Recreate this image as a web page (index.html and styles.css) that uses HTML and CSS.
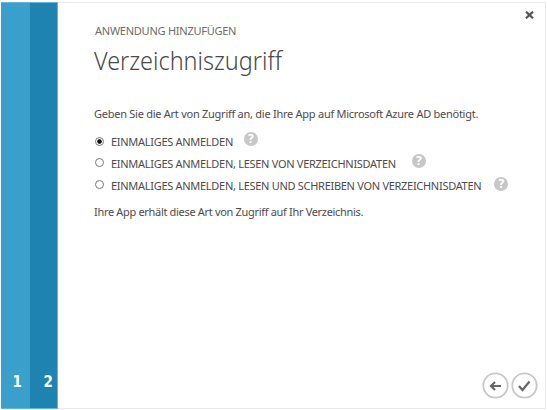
FILE: index.html
```html
<!DOCTYPE html>
<html lang="de">
<head>
<meta charset="utf-8">
<title>Anwendung hinzufügen</title>
<link rel="stylesheet" href="styles.css">
</head>
<body>
<div class="dialog">
  <nav class="steps">
    <div class="step step-one">1</div>
    <div class="step step-two">2</div>
  </nav>
  <main class="content">
    <p class="eyebrow">ANWENDUNG HINZUFÜGEN</p>
    <h1>Verzeichniszugriff</h1>
    <p class="intro">Geben Sie die Art von Zugriff an, die Ihre App auf Microsoft Azure AD benötigt.</p>
    <div class="options">
      <div class="option"><i class="radio checked"></i><span>EINMALIGES ANMELDEN</span><b class="help help-first">?</b></div>
      <div class="option"><i class="radio"></i><span>EINMALIGES ANMELDEN, LESEN VON VERZEICHNISDATEN</span><b class="help help-second">?</b></div>
      <div class="option"><i class="radio"></i><span>EINMALIGES ANMELDEN, LESEN UND SCHREIBEN VON VERZEICHNISDATEN</span><b class="help help-third">?</b></div>
    </div>
    <p class="note">Ihre App erhält diese Art von Zugriff auf Ihr Verzeichnis.</p>
    <div class="actions">
      <svg width="27" height="27" viewBox="0 0 27 27"><circle cx="13.5" cy="13.5" r="12.2"/><path d="M19 14H9M13 10l-4 4 4 4"/></svg>
      <svg width="27" height="27" viewBox="0 0 27 27"><circle cx="13.5" cy="13.5" r="12.2"/><path d="M8 14l3.500 4 7-8.500"/></svg>
    </div>
  </main>
  <svg class="close" width="9" height="8" viewBox="0 0 9 8"><path d="M1 .7l7 6.600M8 .7L1 7.300"/></svg>
</div>
</body>
</html>
```
FILE: styles.css
```css
* { box-sizing: border-box; }
body { margin: 0; background: #fff; font-family: "Noto Sans", "Open Sans", sans-serif; }
p, h1 { margin: 0; white-space: nowrap; }
.dialog {
  position: relative;
  display: flex;
  width: 545px;
  height: 407px;
  margin: 2px 0 0 1px;
  border: 1px solid #e8e8e8;
  border-left: 0;
}
.steps { display: flex; width: 57px; margin: -1px 0; border: 1px solid #6ab5d6; border-left: 0; flex: none; }
.step {
  display: flex;
  align-items: flex-end;
  justify-content: flex-end;
  padding-bottom: 16px;
  color: #fff;
  font-family: "DejaVu Sans Condensed", "DejaVu Sans", sans-serif;
  font-stretch: condensed;
  font-size: 15px;
  line-height: 20px;
  font-weight: 700;
}
.step-one { width: 29px; padding-right: 8px; background: #3a9fca; }
.step-two { width: 27px; padding-right: 4px; background: #1e83b0; }
.content { display: flex; flex-direction: column; flex: 1; padding-left: 36px; color: #4e4a4e; }
.eyebrow { margin: 20px 0 0 1px; font-size: 11px; line-height: 16px; letter-spacing: -.25px; color: #6c6c6c; }
h1 {
  width: max-content;
  margin-top: 3px;
  font-size: 26px;
  line-height: 36px;
  font-weight: 300;
  color: #48484c;
  transform: scaleX(.9);
  transform-origin: left;
}
.intro { margin-top: 28px; font-size: 11px; line-height: 16px; letter-spacing: -.26px; }
.options { margin-top: 8px; }
.option { display: flex; align-items: center; height: 22px; font-size: 11px; letter-spacing: -.29px; white-space: nowrap; }
.radio { width: 9px; height: 9px; margin: -2px 8px 0 1px; border: 1px solid #777; border-radius: 50%; flex: none; }
.option span { margin: 1px 0 0 -1px; }
.radio.checked { margin-top: 0; background: radial-gradient(circle, #111 0 1.9px, #fff 2.6px); }
.help {
  width: 14px;
  height: 14px;
  border-radius: 50%;
  background: #c7c7c7;
  color: #fff;
  font-size: 12px;
  line-height: 14px;
  letter-spacing: 0;
  text-align: center;
}
.help-first { margin: -4px 0 0 11px; }
.help-second { margin: -4px 0 0 16px; }
.help-third { margin: -2px 0 0 13px; }
.note { margin-top: 8px; font-size: 11px; line-height: 16px; letter-spacing: -.32px; }
.actions { display: flex; justify-content: flex-end; gap: 2px; margin: auto 7px 9px 0; }
.actions svg { fill: none; stroke: #c8c8c8; stroke-width: 1.8; }
.actions path { stroke: #666; stroke-width: 2.2; }
.close { position: absolute; top: 8px; right: 11px; fill: none; stroke: #555; stroke-width: 2.2; }
```
